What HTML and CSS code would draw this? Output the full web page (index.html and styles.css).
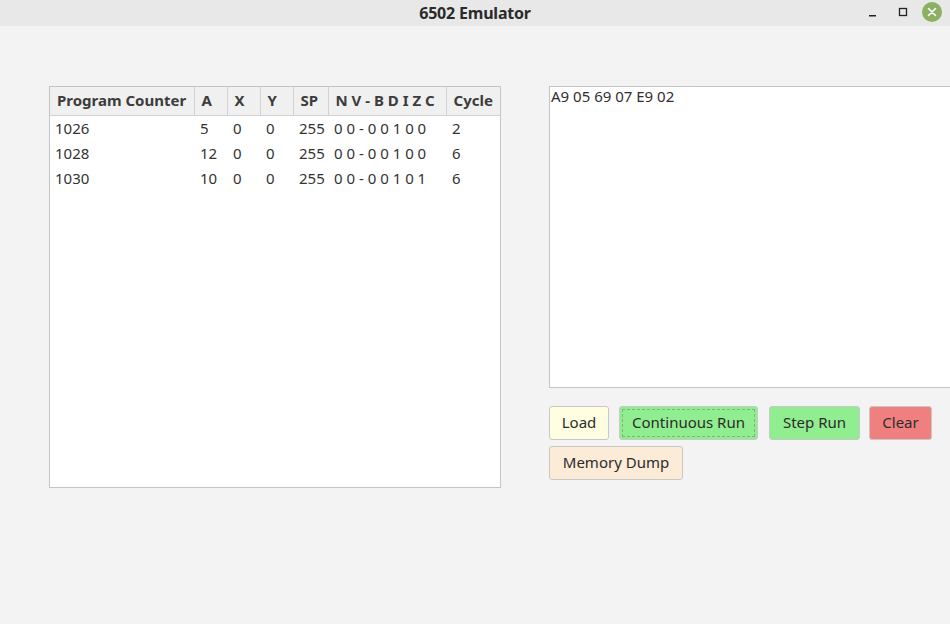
FILE: index.html
```html
<!DOCTYPE html>
<html>
<head>
<meta charset="utf-8">
<link rel="stylesheet" href="styles.css">
</head>
<body>
<div class="titlebar">
  <div class="title">6502 Emulator</div>
  <div class="controls">
    <svg class="ctl min" width="14" height="14" viewBox="0 0 14 14"><rect x="3" y="10" width="7" height="1.5" fill="#222"/></svg>
    <svg class="ctl max" width="14" height="14" viewBox="0 0 14 14"><rect x="3.5" y="3.5" width="7" height="7" fill="none" stroke="#222" stroke-width="1.3"/></svg>
    <svg class="close" width="20" height="20" viewBox="0 0 20 20"><circle cx="10" cy="10" r="10" fill="#8bb061"/><path d="M6.5 6.5 L13.5 13.5 M13.5 6.5 L6.5 13.5" stroke="#fff" stroke-width="1.6" stroke-linecap="round"/></svg>
  </div>
</div>
<div class="main">
  <div class="tablebox">
    <table class="regs">
      <thead>
        <tr>
          <th class="c-pc">Program Counter</th>
          <th class="c-a">A</th>
          <th class="c-x">X</th>
          <th class="c-y">Y</th>
          <th class="c-sp">SP</th>
          <th class="c-f">N V - B D I Z C</th>
          <th class="c-cy">Cycle</th>
        </tr>
      </thead>
      <tbody>
        <tr><td>1026</td><td>5</td><td>0</td><td>0</td><td>255</td><td>0 0 - 0 0 1 0 0</td><td>2</td></tr>
        <tr><td>1028</td><td>12</td><td>0</td><td>0</td><td>255</td><td>0 0 - 0 0 1 0 0</td><td>6</td></tr>
        <tr><td>1030</td><td>10</td><td>0</td><td>0</td><td>255</td><td>0 0 - 0 0 1 0 1</td><td>6</td></tr>
      </tbody>
    </table>
  </div>
  <div class="right">
    <div class="editor">A9 05 69 07 E9 02</div>
    <div class="buttons">
      <button class="btn load">Load</button>
      <button class="btn cont">Continuous Run</button>
      <button class="btn step">Step Run</button>
      <button class="btn clear">Clear</button>
      <button class="btn dump">Memory Dump</button>
    </div>
  </div>
</div>
</body>
</html>
```
FILE: styles.css
```css
html, body {
  margin: 0;
  padding: 0;
  width: 950px;
  height: 624px;
  overflow: hidden;
  background: #f3f3f3;
  font-family: "Noto Sans", "Open Sans", sans-serif;
  color: #3a3a3a;
}
.titlebar {
  height: 26px;
  background: #e8e8e8;
  position: relative;
  display: flex;
  align-items: center;
  justify-content: center;
}
.title {
  font-weight: bold;
  font-size: 16px;
  color: #2b2b2b;
  letter-spacing: -0.2px;
}
.controls {
  position: absolute;
  right: 8px;
  top: 2px;
  display: flex;
  align-items: center;
}
.ctl { display: block; }
.min { margin-right: 16px; }
.max { margin-right: 12px; }
.close { display: block; }
.main {
  display: flex;
  padding: 60px 0 0 49px;
}
.tablebox {
  width: 450px;
  height: 400px;
  border: 1px solid #c4c4c4;
  background: #fff;
  flex: none;
}
.regs {
  border-collapse: collapse;
  table-layout: fixed;
  width: 450px;
  font-size: 15px;
}
.regs th {
  box-sizing: border-box;
  background: #f0f0f0;
  font-weight: bold;
  text-align: left;
  height: 28px;
  padding: 0 0 1px 7px;
  border-right: 1px solid #d2d2d2;
  border-bottom: 1px solid #d2d2d2;
  white-space: nowrap;
  overflow: hidden;
  color: #3c3c3c;
}
.regs th:last-child { border-right: none; }
.regs td {
  height: 25px;
  padding: 0 0 0 6px;
  white-space: nowrap;
  color: #333;
}
.regs td:first-child { padding-left: 5px; }
.c-pc { width: 144px; }
.c-a { width: 33px; }
.c-x { width: 33px; }
.c-y { width: 33px; }
.c-sp { width: 35px; }
.c-f { width: 118px; }
.c-cy { width: 54px; }
.right {
  margin-left: 48px;
  flex: none;
}
.editor {
  width: 420px;
  height: 300px;
  background: #fff;
  border: 1px solid #c4c4c4;
  font-size: 15px;
  padding: 0 0 0 1px;
  line-height: 18px;
  color: #2f2f2f;
}
.buttons {
  display: flex;
  flex-wrap: wrap;
  width: 400px;
  margin-top: 18px;
  row-gap: 6px;
}
.btn {
  height: 34px;
  border: 1px solid #c8c8c8;
  border-radius: 3px;
  font-family: inherit;
  font-size: 15px;
  line-height: 30px;
  color: #2c2c2c;
  padding: 0 0 2px 0;
  margin: 0;
}
.load { width: 60px; background: #fffee0; margin-right: 10px; }
.cont { width: 139px; background: #90ee90; margin-right: 11px; outline: 1px dashed #6fbf6f; outline-offset: -4px; }
.step { width: 91px; background: #90ee90; margin-right: 9px; }
.clear { width: 63px; background: #f08080; }
.dump { width: 134px; background: #fbebd7; }
```
